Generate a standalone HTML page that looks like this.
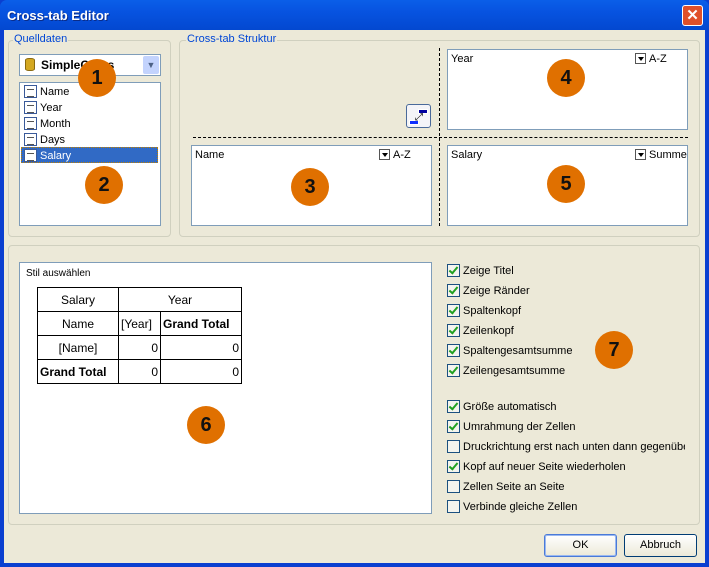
<!DOCTYPE html><html><head><style>
*{box-sizing:border-box;margin:0;padding:0}
body{width:709px;height:567px;overflow:hidden;font-family:"Liberation Sans",sans-serif;font-size:11px;position:relative;background:#0a3fd0}
.a{position:absolute;white-space:nowrap}
#title{left:0;top:0;width:709px;height:30px;background:linear-gradient(#0a5fe8,#0753e0 40%,#0348d0);border-radius:7px 7px 0 0;color:#fff;font-weight:bold;font-size:13px;padding:8px 0 0 7px;text-shadow:1px 1px #0a2c88}
#body{left:4px;top:30px;width:701px;height:533px;background:#ece9d8}
.grp{border:1px solid #d0d0bf;border-radius:4px}
.lg{background:#ece9d8;color:#0046d5;padding:0 1px}
.box{background:#fff;border:1px solid #7f9db9}
.c{width:38px;height:38px;border-radius:50%;background:#e07000;font:bold 20px "Liberation Sans",sans-serif;color:#111;text-align:center;line-height:38px}
.dd{display:inline-block;width:11px;height:11px;border:1px solid #555;vertical-align:-2px;margin-right:3px;position:relative}
.dd:after{content:"";position:absolute;left:2px;top:3px;border:3px solid transparent;border-top:4px solid #000}
table{border-collapse:collapse;font-size:12px;white-space:nowrap}
td{border:1px solid #000;height:24px;padding:0 2px}
.cb{width:13px;height:13px;border:1px solid #1c5180;background:#f4f4ee;position:absolute}
.ck:after{content:"";position:absolute;left:3px;top:0px;width:3px;height:7px;border:solid #21a121;border-width:0 2px 2px 0;transform:rotate(40deg)}
.btn{border:1px solid #003c74;border-radius:3px;background:linear-gradient(#fff,#ece9d8);text-align:center;line-height:20px}
.it{position:absolute;left:4px;width:13px;height:13px;border:1px solid #3a5a9a;background:#fff}
.it:before{content:"";position:absolute;left:2px;top:3px;width:7px;height:6px;border-top:1px solid #555;border-bottom:1px solid #555}
.r{position:relative;padding-left:16px}
</style></head><body>
<div class="a" id="title">Cross-tab Editor</div>
<div class="a" style="left:682px;top:5px;width:21px;height:21px;border:1px solid #fff;border-radius:3px;background:#e0502a;color:#fff;font:bold 15px 'Liberation Sans';text-align:center;line-height:19px">✕</div>
<div class="a" id="body"></div>
<div class="a grp" style="left:8px;top:40px;width:163px;height:197px"></div>
<div class="a lg" style="left:13px;top:33px">Quelldaten</div>
<div class="a grp" style="left:179px;top:40px;width:521px;height:197px"></div>
<div class="a lg" style="left:186px;top:33px">Cross-tab Struktur</div>
<div class="a grp" style="left:8px;top:245px;width:692px;height:280px"></div>
<div class="a box" style="left:19px;top:54px;width:142px;height:22px;font-weight:bold;font-size:12px;padding:3px 0 0 21px">SimpleCross</div>
<div class="a" style="left:25px;top:58px;width:10px;height:13px;background:#d4a820;border-radius:4px/2px;border:1px solid #8a6a10"></div>
<div class="a" style="left:143px;top:56px;width:16px;height:18px;background:#c3d3fd;border-radius:2px;color:#4d6185;text-align:center;font-size:9px;line-height:18px">▼</div>
<div class="a box" style="left:19px;top:82px;width:142px;height:144px"></div>
<div class="a" style="left:21px;top:147px;width:137px;height:16px;background:#316ac5;border:1px dotted #c08000"></div>
<div class="a" style="left:20px;top:84px;width:140px;line-height:16px">
<div style="position:relative;padding-left:20px">Name<span class="it" style="top:1px"></span></div>
<div style="position:relative;padding-left:20px">Year<span class="it" style="top:1px"></span></div>
<div style="position:relative;padding-left:20px">Month<span class="it" style="top:1px"></span></div>
<div style="position:relative;padding-left:20px">Days<span class="it" style="top:1px"></span></div>
<div style="position:relative;padding-left:20px;color:#fff">Salary<span class="it" style="top:1px"></span></div>
</div>
<div class="a" style="left:439px;top:48px;height:178px;border-left:1px dashed #000"></div>
<div class="a" style="left:193px;top:137px;width:495px;border-top:1px dashed #000"></div>
<div class="a box" style="left:447px;top:49px;width:241px;height:81px;padding:3px"><span>Year</span><span style="position:absolute;left:187px;top:3px"><i class="dd"></i>A-Z</span></div>
<div class="a box" style="left:191px;top:145px;width:241px;height:81px;padding:3px"><span>Name</span><span style="position:absolute;left:187px;top:3px"><i class="dd"></i>A-Z</span></div>
<div class="a box" style="left:447px;top:145px;width:241px;height:81px;padding:3px"><span>Salary</span><span style="position:absolute;left:187px;top:3px"><i class="dd"></i>Summe</span></div>
<div class="a" style="left:406px;top:104px;width:25px;height:24px;border:1px solid #4a6a9a;border-radius:3px;background:#f4f4f8">
<div class="a" style="left:11px;top:4px;width:10px;height:5px;background:#0000a0;box-shadow:inset 0 0 0 1px #fff"></div>
<div class="a" style="left:2px;top:15px;width:10px;height:5px;background:#1030ff;box-shadow:inset 0 0 0 1px #fff"></div>
<div class="a" style="left:8px;top:7px;font-size:10px">⤢</div></div>
<div class="a box" style="left:19px;top:262px;width:413px;height:252px"></div>
<div class="a" style="left:26px;top:268px;font-size:10px">Stil auswählen</div>
<table class="a" style="left:37px;top:287px;width:205px">
<tr><td style="text-align:center;width:81px">Salary</td><td colspan="2" style="text-align:center">Year</td></tr>
<tr><td style="text-align:center">Name</td><td style="width:42px">[Year]</td><td style="font-weight:bold">Grand Total</td></tr>
<tr><td style="text-align:center">[Name]</td><td style="text-align:right">0</td><td style="text-align:right">0</td></tr>
<tr><td style="font-weight:bold">Grand Total</td><td style="text-align:right">0</td><td style="text-align:right">0</td></tr></table>
<div class="a" style="left:447px;top:261px;line-height:20px">
<div class="r">Zeige Titel<i class="cb ck" style="left:0;top:3px"></i></div>
<div class="r">Zeige Ränder<i class="cb ck" style="left:0;top:3px"></i></div>
<div class="r">Spaltenkopf<i class="cb ck" style="left:0;top:3px"></i></div>
<div class="r">Zeilenkopf<i class="cb ck" style="left:0;top:3px"></i></div>
<div class="r">Spaltengesamtsumme<i class="cb ck" style="left:0;top:3px"></i></div>
<div class="r">Zeilengesamtsumme<i class="cb ck" style="left:0;top:3px"></i></div>
<div style="height:16px"></div>
<div class="r">Größe automatisch<i class="cb ck" style="left:0;top:3px"></i></div>
<div class="r">Umrahmung der Zellen<i class="cb ck" style="left:0;top:3px"></i></div>
<div class="r" style="width:238px;overflow:hidden">Druckrichtung erst nach unten dann gegenüber<i class="cb" style="left:0;top:3px"></i></div>
<div class="r">Kopf auf neuer Seite wiederholen<i class="cb ck" style="left:0;top:3px"></i></div>
<div class="r">Zellen Seite an Seite<i class="cb" style="left:0;top:3px"></i></div>
<div class="r">Verbinde gleiche Zellen<i class="cb" style="left:0;top:3px"></i></div>
</div>
<div class="a btn" style="left:544px;top:534px;width:73px;height:23px;border-color:#4a7ad8;box-shadow:inset 0 0 0 1px #9ab8f0">OK</div>
<div class="a btn" style="left:624px;top:534px;width:73px;height:23px">Abbruch</div>
<div class="a c" style="left:78px;top:59px">1</div>
<div class="a c" style="left:85px;top:166px">2</div>
<div class="a c" style="left:291px;top:168px">3</div>
<div class="a c" style="left:547px;top:59px">4</div>
<div class="a c" style="left:547px;top:165px">5</div>
<div class="a c" style="left:187px;top:406px">6</div>
<div class="a c" style="left:595px;top:331px">7</div>
</body></html>
